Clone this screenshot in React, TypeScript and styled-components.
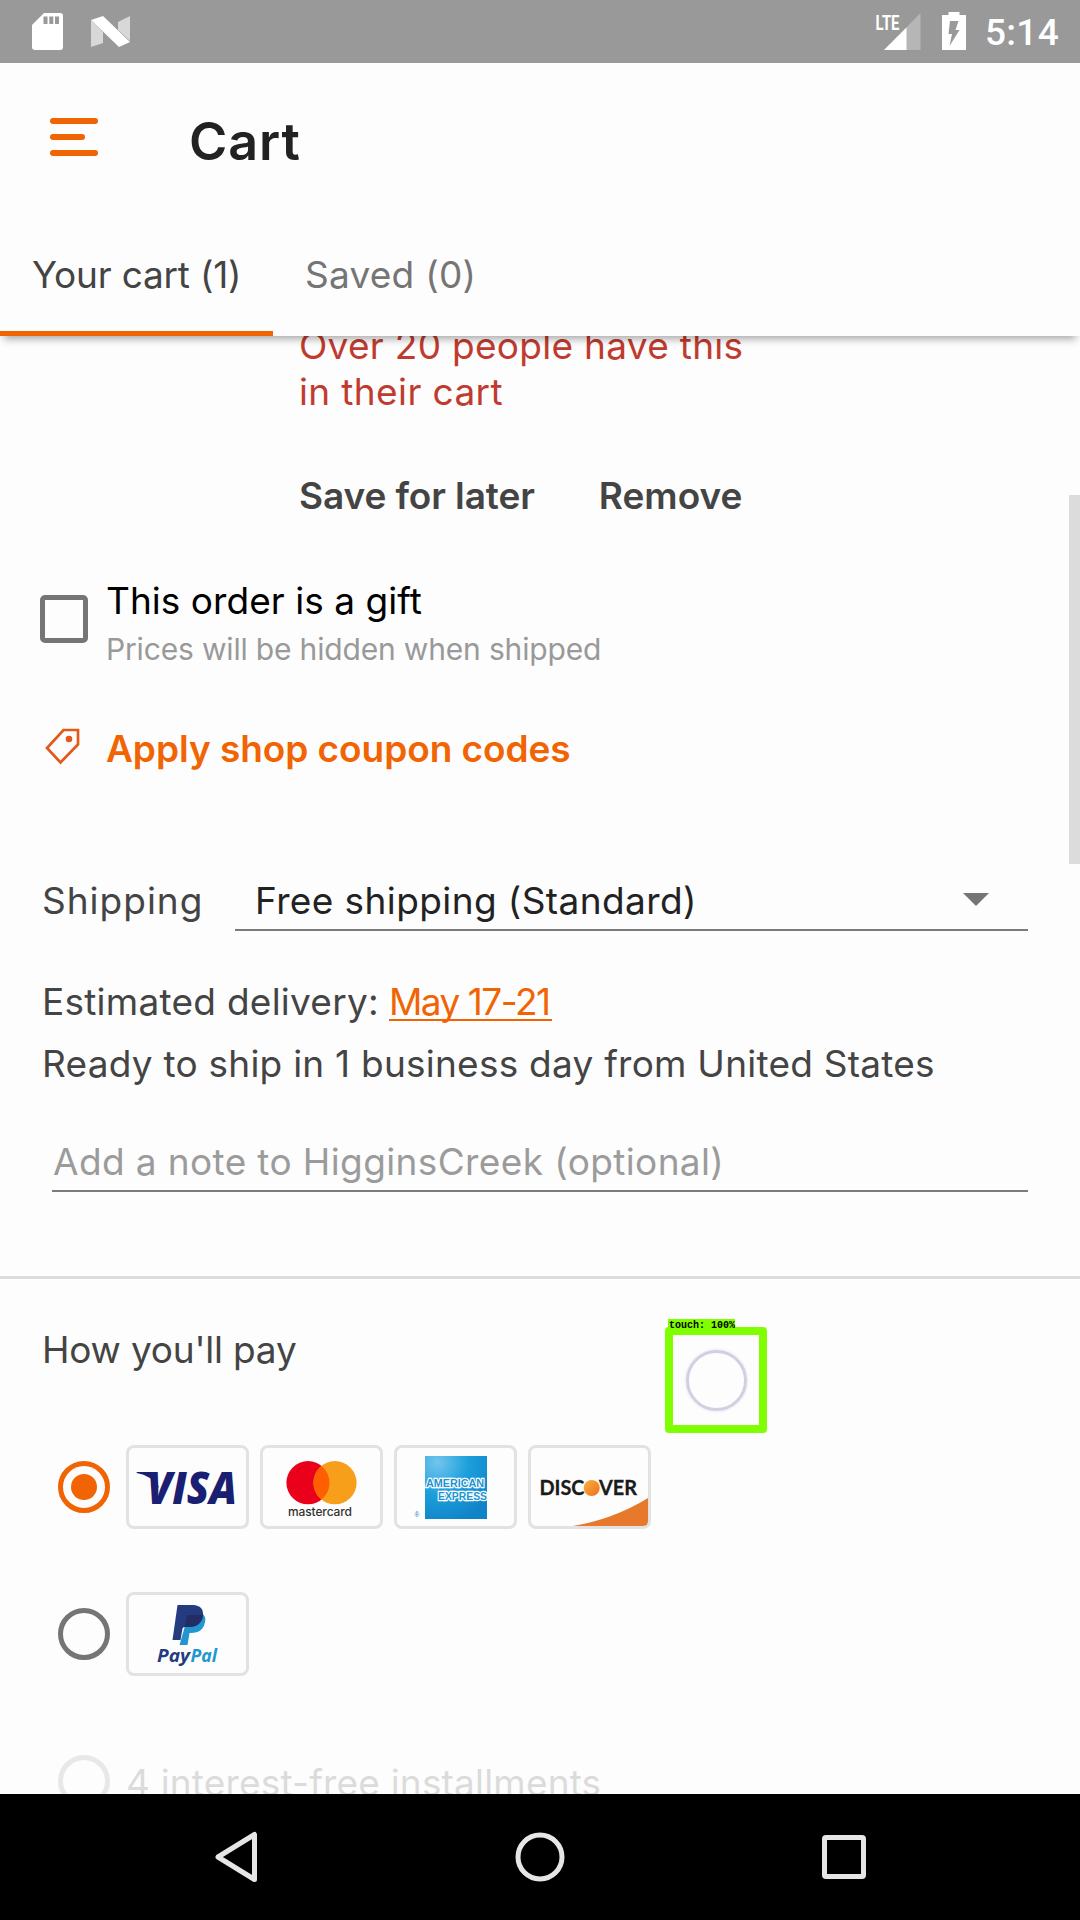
import React from "react";
import styled, { createGlobalStyle } from "styled-components";

const ORANGE = "#f16403";
const GREY = "#757575";

const GlobalStyle = createGlobalStyle`
  * { box-sizing: border-box; }
  body { margin: 0; background: #fdfdfd; }
  svg { display: block; flex: none; }
`;

const Screen = styled.div`
  position: relative;
  display: flex;
  flex-direction: column;
  width: 1080px;
  height: 1920px;
  overflow: hidden;
  background: #fdfdfd;
  color: #444;
  font-family: Inter, "Liberation Sans", sans-serif;
`;

const Text = styled.span<{ $track?: number; $tone?: string; $strong?: boolean }>`
  font-size: 37px;
  line-height: 46px;
  white-space: pre;
  letter-spacing: ${(p) => p.$track ?? 0}px;
  color: ${(p) => p.$tone ?? "#444"};
  font-weight: ${(p) => (p.$strong ? 600 : 400)};
`;

const StatusBar = styled.div`
  display: flex;
  flex: none;
  align-items: flex-start;
  height: 63px;
  padding: 12px 21px 0 32px;
  background: #999;
`;

const StatusIcons = styled.div<{ $gap: number }>`
  display: flex;
  gap: ${(p) => p.$gap}px;
`;

const Spacer = styled.div`
  flex: 1;
`;

const Clock = styled.span`
  margin-left: 19px;
  font: 500 37px/42px Roboto, sans-serif;
  letter-spacing: 0.3px;
  color: #fff;
`;

const AppBar = styled.header`
  position: relative;
  z-index: 1;
  flex: none;
  height: 273px;
  background: #fdfdfd;
  box-shadow: 0 7px 8px -4px rgba(0, 0, 0, 0.34);
`;

const TitleRow = styled.div`
  display: flex;
  align-items: flex-start;
  height: 145px;
  padding: 49px 0 0 50px;
`;

const MenuButton = styled.button`
  display: flex;
  flex-direction: column;
  gap: 10px;
  width: 48px;
  margin: 6px 91px 0 0;
  padding: 0;
  border: 0;
  background: none;
`;

const MenuBar = styled.i<{ $short?: boolean }>`
  width: ${(p) => (p.$short ? 35 : 48)}px;
  height: 6px;
  border-radius: 3px;
  background: ${ORANGE};
`;

const Title = styled.h1`
  margin: 0;
  font-size: 52px;
  font-weight: 600;
  line-height: 60px;
  letter-spacing: 0.9px;
  color: #222;
`;

const Tabs = styled.nav`
  display: flex;
  height: 128px;
`;

const Tab = styled.div<{ $active?: boolean }>`
  padding: 44px 32px 0;
  border-bottom: 5px solid ${(p) => (p.$active ? ORANGE : "transparent")};
  ${(p) => p.$active && "width: 273px;"}
`;

const Content = styled.main`
  flex: 1;
  min-height: 0;
  overflow: hidden;
`;

const Notice = styled.div`
  display: flex;
  flex-direction: column;
  margin-top: -13px;
  padding-left: 299px;
`;

const Actions = styled.div`
  display: flex;
  gap: 64px;
  margin-top: 58px;
  padding-left: 299px;
`;

const GiftRow = styled.label`
  display: flex;
  margin-top: 59px;
  padding-left: 40px;
`;

const Checkbox = styled.i`
  width: 48px;
  height: 48px;
  margin: 17px 18px 0 0;
  border: 5px solid ${GREY};
  border-radius: 5px;
`;

const GiftText = styled.div`
  display: flex;
  flex-direction: column;
  gap: 5px;
`;

const Hint = styled.span`
  font-size: 30px;
  line-height: 40px;
  letter-spacing: -0.17px;
  color: #999;
`;

const CouponRow = styled.div`
  display: flex;
  gap: 25px;
  margin-top: 57px;
  padding-left: 44px;
`;

const ShippingRow = styled.div`
  display: flex;
  align-items: flex-start;
  justify-content: space-between;
  margin-top: 106px;
  padding: 0 52px 0 42px;
`;

const Select = styled.div`
  display: flex;
  align-items: flex-start;
  justify-content: space-between;
  width: 793px;
  height: 53px;
  padding: 0 39px 0 20px;
  border-bottom: 2px solid #7b7b7b;
`;

const Arrow = styled.i`
  margin-top: 15px;
  border: 13px solid transparent;
  border-top-color: ${GREY};
  border-bottom: 0;
`;

const Delivery = styled.div`
  display: flex;
  height: 42px;
  margin-top: 48px;
  padding-left: 42px;
`;

const DateLink = styled.a`
  width: 163px;
  height: 42px;
  margin-left: 10px;
  border-bottom: 2px solid ${ORANGE};
`;

const Origin = styled.div`
  display: flex;
  margin-top: 20px;
  padding-left: 42px;
`;

const NoteField = styled.div`
  display: flex;
  height: 53px;
  margin: 52px 52px 0;
  padding-left: 1px;
  border-bottom: 2px solid #7b7b7b;
`;

const Divider = styled.hr`
  height: 3px;
  margin: 84px 0 0;
  border: 0;
  background: #dcdcdc;
`;

const PayHeading = styled.div`
  display: flex;
  margin-top: 48px;
  padding-left: 42px;
`;

const PayRow = styled.div<{ $top: number; $faded?: boolean }>`
  display: flex;
  align-items: center;
  height: 84px;
  margin-top: ${(p) => p.$top}px;
  padding-left: 58px;
  opacity: ${(p) => (p.$faded ? 0.15 : 1)};
`;

const Radio = styled.i<{ $on?: boolean }>`
  display: grid;
  place-items: center;
  width: 52px;
  height: 52px;
  margin-right: 16px;
  border: 5px solid ${(p) => (p.$on ? ORANGE : GREY)};
  border-radius: 50%;
  &::after {
    content: "";
    width: 26px;
    height: 26px;
    border-radius: 50%;
    background: ${(p) => (p.$on ? ORANGE : "transparent")};
  }
`;

const Cards = styled.div`
  display: flex;
  gap: 11px;
`;

const CardFrame = styled.div`
  width: 123px;
  height: 84px;
  border: 3px solid #e2e2e2;
  border-radius: 8px;
  & > svg { margin: -3px; }
`;

const InstallmentText = styled(Text)`
  margin-top: 4px;
`;

const NavBar = styled.footer`
  display: flex;
  flex: none;
  align-items: center;
  justify-content: space-between;
  height: 126px;
  padding: 0 214px;
  background: #000;
`;

const ScrollThumb = styled.i`
  position: absolute;
  top: 495px;
  right: 0;
  width: 11px;
  height: 369px;
  background: #dcdcdc;
`;

const TouchMarker = styled.div`
  position: absolute;
  top: 1319px;
  left: 665px;
  width: 102px;
`;

const TouchLabel = styled.div`
  position: relative;
  z-index: 1;
  width: 67px;
  height: 12px;
  margin-left: 3px;
  padding-left: 1px;
  background: #80ff00;
  color: #000;
  font: bold 10px/14px "Liberation Mono", monospace;
  white-space: pre;
`;

const TouchBox = styled.div`
  display: grid;
  place-items: center;
  height: 106px;
  margin-top: -4px;
  border: 8px solid #80ff00;
  border-radius: 4px;
`;

const TouchRing = styled.i`
  width: 61px;
  height: 61px;
  border: 3px solid #d3cfe2;
  border-radius: 50%;
  box-shadow: 0 0 3px #dedbea;
`;

function Card({ children }: { children: React.ReactNode }) {
  return (
    <CardFrame>
      <svg width="123" height="84" viewBox="0 0 123 84">{children}</svg>
    </CardFrame>
  );
}

const VisaCard = () => (
  <Card>
    <path d="M10.700 27H25Q28 27 29 30L33 43Q25 30 10.700 28Z" fill="#1a1f71" />
    <text x="21" y="58.500" fontFamily="Open Sans" fontWeight="800" fontStyle="italic" fontSize="44" textLength="90" lengthAdjust="spacingAndGlyphs" fill="#1a1f71">VISA</text>
  </Card>
);

const MastercardCard = () => (
  <Card>
    <circle cx="48" cy="37.700" r="21.600" fill="#eb001b" />
    <circle cx="75" cy="37.700" r="21.600" fill="#f79e1b" />
    <path d="M61.500 20.900A21.600 21.600 0 0 1 61.500 54.500A21.600 21.600 0 0 1 61.500 20.900Z" fill="#ff5f00" />
    <text x="28" y="71" fontFamily="Inter" fontWeight="500" fontSize="12" textLength="64" fill="#333">mastercard</text>
  </Card>
);

const AmexCard = () => (
  <Card>
    <defs>
      <radialGradient id="amex" cx="0.2" cy="0.1" r="1">
        <stop offset="0" stopColor="#72c6ee" />
        <stop offset="0.5" stopColor="#1d9fdb" />
        <stop offset="1" stopColor="#0f83c8" />
      </radialGradient>
    </defs>
    <rect x="31" y="11" width="62" height="63" fill="url(#amex)" />
    <g fontFamily="Liberation Sans" fontWeight="700" fill="#1b94d2" stroke="#fff" strokeWidth="2.4" paintOrder="stroke" strokeLinejoin="miter">
      <text x="32" y="41.500" fontSize="11.5" textLength="58" lengthAdjust="spacingAndGlyphs">AMERICAN</text>
      <text x="44" y="54.500" fontSize="11.5" textLength="49" lengthAdjust="spacingAndGlyphs">EXPRESS</text>
    </g>
    <text x="20.500" y="71.500" fontFamily="Liberation Sans" fontSize="6.5" fill="#1b7fc4">®</text>
  </Card>
);

const DiscoverCard = () => (
  <Card>
    <defs>
      <linearGradient id="sun" x1="0" y1="0" x2="1" y2="1">
        <stop offset="0" stopColor="#f9b13e" />
        <stop offset="1" stopColor="#ee6f1f" />
      </linearGradient>
    </defs>
    <g fontFamily="Lato" fontWeight="700" fontSize="21" fill="#1a1a1a" stroke="#1a1a1a" strokeWidth="0.3">
      <text x="11.500" y="50.300" textLength="45" lengthAdjust="spacingAndGlyphs">DISC</text>
      <text x="71" y="50.300" textLength="38" lengthAdjust="spacingAndGlyphs">VER</text>
    </g>
    <circle cx="63.700" cy="43" r="8" fill="url(#sun)" />
    <path d="M45 81Q86 74 120 53V76Q120 81 115 81Z" fill="#e6792b" />
  </Card>
);

const PaypalCard = () => (
  <Card>
    <path d="M63 20H70Q81 21 79 30Q77 41 65 41H63.500L61.500 53H53.500Z" fill="#2196cf" />
    <path d="M51.500 13H67Q78 13.500 77 24Q75 35 63 35H58.500Q56.700 35 56.400 37L54.500 48H46.500Z" fill="#253b80" />
    <path d="M61 23H77Q75 35 63 35H58.500Z" fill="#222d65" />
    <g fontFamily="Open Sans" fontWeight="700" fontStyle="italic" fontSize="17">
      <text x="31" y="70" textLength="33" lengthAdjust="spacingAndGlyphs" fill="#253b80">Pay</text>
      <text x="64.500" y="70" textLength="26.500" lengthAdjust="spacingAndGlyphs" fill="#2196cf">Pal</text>
    </g>
  </Card>
);

export default function App() {
  return (
    <Screen>
      <GlobalStyle />
      <StatusBar>
        <StatusIcons $gap={28}>
          <svg width="31" height="40" viewBox="0 0 31 40">
            <path d="M12 1H28Q31 1 31 4V35Q31 38 28 38H3Q0 38 0 35V13Z" fill="#fff" />
            <path d="M11.500 4.500h4v7.500h-4zM17.300 4.500h4v7.500h-4zM23 4.500h4v7.500h-4z" fill="#999" />
          </svg>
          <svg width="40" height="40" viewBox="0 0 40 40">
            <path d="M0 8L12 20V31L0 35ZM27 10L39 4V29L27 18Z" fill="#d8d8d8" />
            <path d="M0 8L12 4L39 30L28 35Z" fill="#fff" />
          </svg>
        </StatusIcons>
        <Spacer />
        <StatusIcons $gap={21}>
          <svg width="46" height="40" viewBox="0 0 46 40">
            <path d="M45.500 1V38H9Z" fill="#b6b6b6" />
            <path d="M31.500 15.500V38H9Z" fill="#fff" />
            <text x="0.500" y="17.500" fontFamily="Roboto" fontWeight="700" fontSize="21" textLength="24" lengthAdjust="spacingAndGlyphs" fill="#fff">LTE</text>
          </svg>
          <svg width="24" height="40" viewBox="0 0 24 40">
            <path d="M0 3H6.500V0H17.500V3H24V38H0Z" fill="#fff" />
            <path d="M8 9H16.500L13.500 18H17.500L7.500 34L10 22H6.500Z" fill="#999" />
          </svg>
        </StatusIcons>
        <Clock>5:14</Clock>
      </StatusBar>

      <AppBar>
        <TitleRow>
          <MenuButton aria-label="Menu">
            <MenuBar />
            <MenuBar $short />
            <MenuBar />
          </MenuButton>
          <Title>Cart</Title>
        </TitleRow>
        <Tabs>
          <Tab $active><Text $track={-0.2}>Your cart (1)</Text></Tab>
          <Tab><Text $track={0.25} $tone={GREY}>Saved (0)</Text></Tab>
        </Tabs>
      </AppBar>

      <Content>
        <Notice>
          <Text $track={0.3} $tone="#c03b2f">Over 20 people have this</Text>
          <Text $track={0.38} $tone="#c03b2f">in their cart</Text>
        </Notice>
        <Actions>
          <Text $strong $track={-0.1}>Save for later</Text>
          <Text $strong>Remove</Text>
        </Actions>
        <GiftRow>
          <Checkbox />
          <GiftText>
            <Text $track={0.04} $tone="#000">This order is a gift</Text>
            <Hint>Prices will be hidden when shipped</Hint>
          </GiftText>
        </GiftRow>
        <CouponRow>
          <svg width="37" height="40" viewBox="0 0 37 40">
            <path d="M19.500 4H34V18.500L16.500 36.500L3 22Z" fill="none" stroke="#e2591b" strokeWidth="2.700" />
            <circle cx="25" cy="13" r="3.300" fill="#e2591b" />
          </svg>
          <Text $strong $track={-0.05} $tone={ORANGE}>Apply shop coupon codes</Text>
        </CouponRow>
        <ShippingRow>
          <Text $track={1}>Shipping</Text>
          <Select>
            <Text $track={0.4} $tone="#222">Free shipping (Standard)</Text>
            <Arrow />
          </Select>
        </ShippingRow>
        <Delivery>
          <Text $track={0.25}>Estimated delivery:</Text>
          <DateLink><Text $track={-1.5} $tone={ORANGE}>May 17-21</Text></DateLink>
        </Delivery>
        <Origin>
          <Text $track={0.24}>Ready to ship in 1 business day from United States</Text>
        </Origin>
        <NoteField>
          <Text $track={0.38} $tone="#9b9b9b">Add a note to HigginsCreek (optional)</Text>
        </NoteField>
        <Divider />
        <PayHeading><Text $track={-0.2}>How you'll pay</Text></PayHeading>
        <PayRow $top={72}>
          <Radio $on />
          <Cards>
            <VisaCard />
            <MastercardCard />
            <AmexCard />
            <DiscoverCard />
          </Cards>
        </PayRow>
        <PayRow $top={63}>
          <Radio />
          <PaypalCard />
        </PayRow>
        <PayRow $top={63} $faded>
          <Radio />
          <InstallmentText $track={0.18} $tone="#222">4 interest-free installments</InstallmentText>
        </PayRow>
      </Content>

      <NavBar>
        <svg width="44" height="52" viewBox="0 0 44 52">
          <path d="M40.500 3.500V48.500L4 26Z" fill="none" stroke="#e6e6e6" strokeWidth="5" strokeLinejoin="round" />
        </svg>
        <svg width="50" height="50" viewBox="0 0 50 50">
          <circle cx="25" cy="25" r="22" fill="none" stroke="#e6e6e6" strokeWidth="5" />
        </svg>
        <svg width="44" height="44" viewBox="0 0 44 44">
          <rect x="2.500" y="2.500" width="39" height="39" rx="1.500" fill="none" stroke="#e6e6e6" strokeWidth="5" />
        </svg>
      </NavBar>

      <ScrollThumb />
      <TouchMarker>
        <TouchLabel>touch: 100%</TouchLabel>
        <TouchBox><TouchRing /></TouchBox>
      </TouchMarker>
    </Screen>
  );
}
